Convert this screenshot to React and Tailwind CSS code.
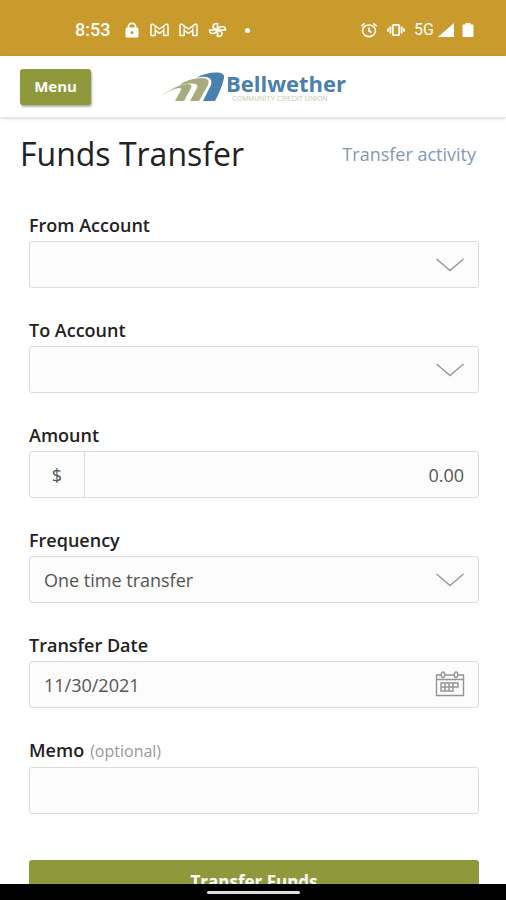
import React, { useState } from "react";

const boxClass =
  "h-[47px] w-full rounded-[3px] border border-[#dcdcdc] bg-[#fcfcfc] px-3.5 text-lg text-[#555555] outline-none";

function LockIcon() {
  return (
    <svg className="h-4 w-4" viewBox="0 0 16 16" fill="none">
      <path d="M4.5 7V4.5a3.5 3.2 0 0 1 7 0V7" stroke="#fff" strokeWidth="1.8" />
      <rect x="1.5" y="5.5" width="13" height="10" rx="1.5" fill="#fff" />
      <circle cx="8" cy="10.5" r="1.5" fill="#c99a2c" />
    </svg>
  );
}

function MailIcon() {
  return (
    <svg className="h-4 w-[19px]" viewBox="0 0 19 16" fill="none" stroke="#fff" strokeWidth="1.5" strokeLinejoin="round">
      <path d="M1 3.5Q1 1.8 3 2.3L9.5 7 16 2.3Q18 1.8 18 3.5V13.5H13.8V8.3L9.5 11.4 5.2 8.3V13.5H1Z" />
      <path d="M5.2 4V8.3M13.8 4V8.3" strokeWidth="1" />
    </svg>
  );
}

function PinwheelIcon() {
  return (
    <svg className="h-4 w-[19px]" viewBox="0 0 19 16" fill="none" stroke="#fff" strokeWidth="1.7" strokeLinejoin="round">
      <path d="M9.5 8V1.5Q5 1.5 5 4.5Q5 6.5 9.5 8" />
      <path d="M9.5 8V14.5Q14 14.5 14 11.5Q14 9.5 9.5 8" />
      <path d="M9.5 8H1.5Q1.5 11.5 5 11.5Q8 11.5 9.5 8" />
      <path d="M9.5 8H17.5Q17.5 4.5 14 4.5Q11 4.5 9.5 8" />
    </svg>
  );
}

function AlarmIcon() {
  return (
    <svg className="h-4 w-[18px]" viewBox="0 0 18 16" fill="none" stroke="#fff" strokeWidth="1.6">
      <ellipse cx="9" cy="8.8" rx="6.5" ry="5.8" />
      <path d="M9 5.5V9L11.5 10.5M1.3 4.2L4.8 1.4M16.7 4.2L13.2 1.4" />
    </svg>
  );
}

function VibrateIcon() {
  return (
    <svg className="h-4 w-5" viewBox="0 0 20 16" fill="none" stroke="#fff" strokeWidth="1.8">
      <rect x="6.8" y="2.8" width="6.4" height="10.4" rx="1" />
      <path d="M4.4 4.5V11.5M15.6 4.5V11.5M2 6.2V9.8M18 6.2V9.8" />
    </svg>
  );
}

function StatusBar() {
  return (
    <div className="flex h-14 shrink-0 items-center justify-between bg-[#c99a2c] pl-[75px] pr-8 pt-1 text-white">
      <div className="flex items-center gap-2.5">
        <span className="mr-1 font-['Roboto',sans-serif] text-lg font-medium">8:53</span>
        <LockIcon />
        <MailIcon />
        <MailIcon />
        <PinwheelIcon />
        <span className="ml-2 size-[5px] rounded-full bg-white" />
      </div>
      <div className="flex items-center gap-2">
        <AlarmIcon />
        <VibrateIcon />
        <div className="flex items-center gap-1">
          <span className="font-['Roboto',sans-serif] text-base">5G</span>
          <svg className="h-4 w-4" viewBox="0 0 16 16">
            <path d="M16 1V15H0Z" fill="#fff" />
          </svg>
        </div>
        <svg className="h-4 w-3" viewBox="0 0 12 16">
          <path d="M3.5 1H8.5V2.5H10.5Q11.5 2.5 11.5 3.5V14Q11.5 15 10.5 15H1.5Q.5 15 .5 14V3.5Q.5 2.5 1.5 2.5H3.5Z" fill="#fff" />
        </svg>
      </div>
    </div>
  );
}

function Logo() {
  return (
    <a href="#home" className="flex items-center">
      <svg className="h-[30px] w-[66px]" viewBox="0 0 66 30">
        <path d="M1 24Q9 17 19 14L17 17Q9 19 1 24Z" fill="#dfe1d0" />
        <path d="M11 18Q18 13 27 12Q33 12 31 16L24 29H15L21 18Q22 16 19 16Q15 16 11 18Z" fill="#a7ac7e" />
        <path d="M19 13Q29 6 43 6Q51 7 48 13L39 29H30L37 16Q39 12 33 11.500Q26 11 19 13Z" fill="#a7ac7e" />
        <path d="M36 6Q46 0 58 0.500Q65 1 64 6Q62 16 55 29H43L51 13Q53 7 47 5Q42 4 36 6Z" fill="#4a80ad" />
      </svg>
      <span className="flex flex-col">
        <span className="font-['Open_Sans',sans-serif] text-[22px] font-bold leading-6 text-[#4a80ad]">Bellwether</span>
        <span className="pl-1.5 font-['Liberation_Sans',sans-serif] text-[7px] leading-none text-[#c9cbb5]">
          COMMUNITY CREDIT UNION
        </span>
      </span>
    </a>
  );
}

function ChevronIcon() {
  return (
    <svg
      className="pointer-events-none absolute right-3.5 top-4 h-4 w-[30px]"
      viewBox="0 0 30 16"
      fill="none"
      stroke="#999"
      strokeWidth="1.5"
    >
      <path d="M1.5 2L15 13.5 28.5 2" />
    </svg>
  );
}

function CalendarIcon() {
  return (
    <svg className="h-[26px] w-[30px]" viewBox="0 0 30 26" fill="none" stroke="#949494" strokeWidth="1.4">
      <path d="M6 4H1.5V24.5H28.5V4H23M10 4H19M1.5 8.500H28.5" />
      <ellipse cx="8" cy="3.8" rx="1.8" ry="2.8" />
      <ellipse cx="21" cy="3.8" rx="1.8" ry="2.8" />
      <path d="M7 12H23V16H18V20H6V12ZM6 16H18M10 12V20M14 12V20M18 12V16" />
    </svg>
  );
}

function Field({ id, label, hint, children }) {
  return (
    <div>
      <label htmlFor={id} className="block pb-1 text-lg font-semibold leading-6 text-[#222222]">
        {label}
        {hint && <span className="ml-1.5 text-base font-normal leading-6 text-[#999999]">{hint}</span>}
      </label>
      {children}
    </div>
  );
}

function SelectField({ id, label, options }) {
  return (
    <Field id={id} label={label}>
      <div className="relative">
        <select id={id} className={`${boxClass} appearance-none`}>
          {options.map((option) => (
            <option key={option}>{option}</option>
          ))}
        </select>
        <ChevronIcon />
      </div>
    </Field>
  );
}

export default function App() {
  const [amount, setAmount] = useState("0.00");
  const [date, setDate] = useState("11/30/2021");
  const [memo, setMemo] = useState("");

  return (
    <div className="flex h-screen flex-col bg-white font-['Open_Sans',sans-serif]">
      <StatusBar />

      <header className="z-10 grid h-[62px] shrink-0 grid-cols-[1fr_auto_1fr] items-center border-b border-[#e2e2e2] px-5 shadow-sm">
        <button
          type="button"
          className="h-9 w-[71px] justify-self-start rounded-[3px] bg-[#8f993c] text-[15px] font-bold text-white shadow-[1px_2px_2px_rgba(0,0,0,0.3)]"
        >
          Menu
        </button>
        <Logo />
      </header>

      <main className="flex-1 overflow-y-auto [scrollbar-width:none]">
        <div className="flex items-center justify-between pl-5 pr-[30px] pt-4">
          <h1 className="text-[32px] leading-10 text-[#222222]">Funds Transfer</h1>
          <a href="#activity" className="text-lg leading-6 text-[#8199b8]">
            Transfer activity
          </a>
        </div>

        <form className="flex flex-col gap-[30px] pl-[29px] pr-[27px] pt-[39px]" onSubmit={(e) => e.preventDefault()}>
          <SelectField id="from" label="From Account" options={[""]} />
          <SelectField id="to" label="To Account" options={[""]} />

          <Field id="amount" label="Amount">
            <div className="flex h-[47px] rounded-[3px] border border-[#dcdcdc] bg-[#fcfcfc] text-lg text-[#555555]">
              <span className="flex w-[55px] items-center justify-center border-r border-[#dcdcdc]">$</span>
              <input
                id="amount"
                className="min-w-0 flex-1 px-3.5 text-right outline-none"
                value={amount}
                onChange={(e) => setAmount(e.target.value)}
              />
            </div>
          </Field>

          <SelectField id="frequency" label="Frequency" options={["One time transfer"]} />

          <Field id="date" label="Transfer Date">
            <div className="relative">
              <input id="date" className={boxClass} value={date} onChange={(e) => setDate(e.target.value)} />
              <button type="button" aria-label="Open calendar" className="absolute right-3.5 top-2.5">
                <CalendarIcon />
              </button>
            </div>
          </Field>

          <Field id="memo" label="Memo" hint="(optional)">
            <input id="memo" className={boxClass} value={memo} onChange={(e) => setMemo(e.target.value)} />
          </Field>

          <button type="submit" className="mt-4 h-11 rounded-[3px] bg-[#8f993c] text-[17px] font-bold text-white">
            Transfer Funds
          </button>
        </form>
      </main>

      <footer className="flex h-4 shrink-0 items-center justify-center bg-black">
        <span className="h-[3px] w-[93px] rounded-full bg-[#dddddd]" />
      </footer>
    </div>
  );
}
